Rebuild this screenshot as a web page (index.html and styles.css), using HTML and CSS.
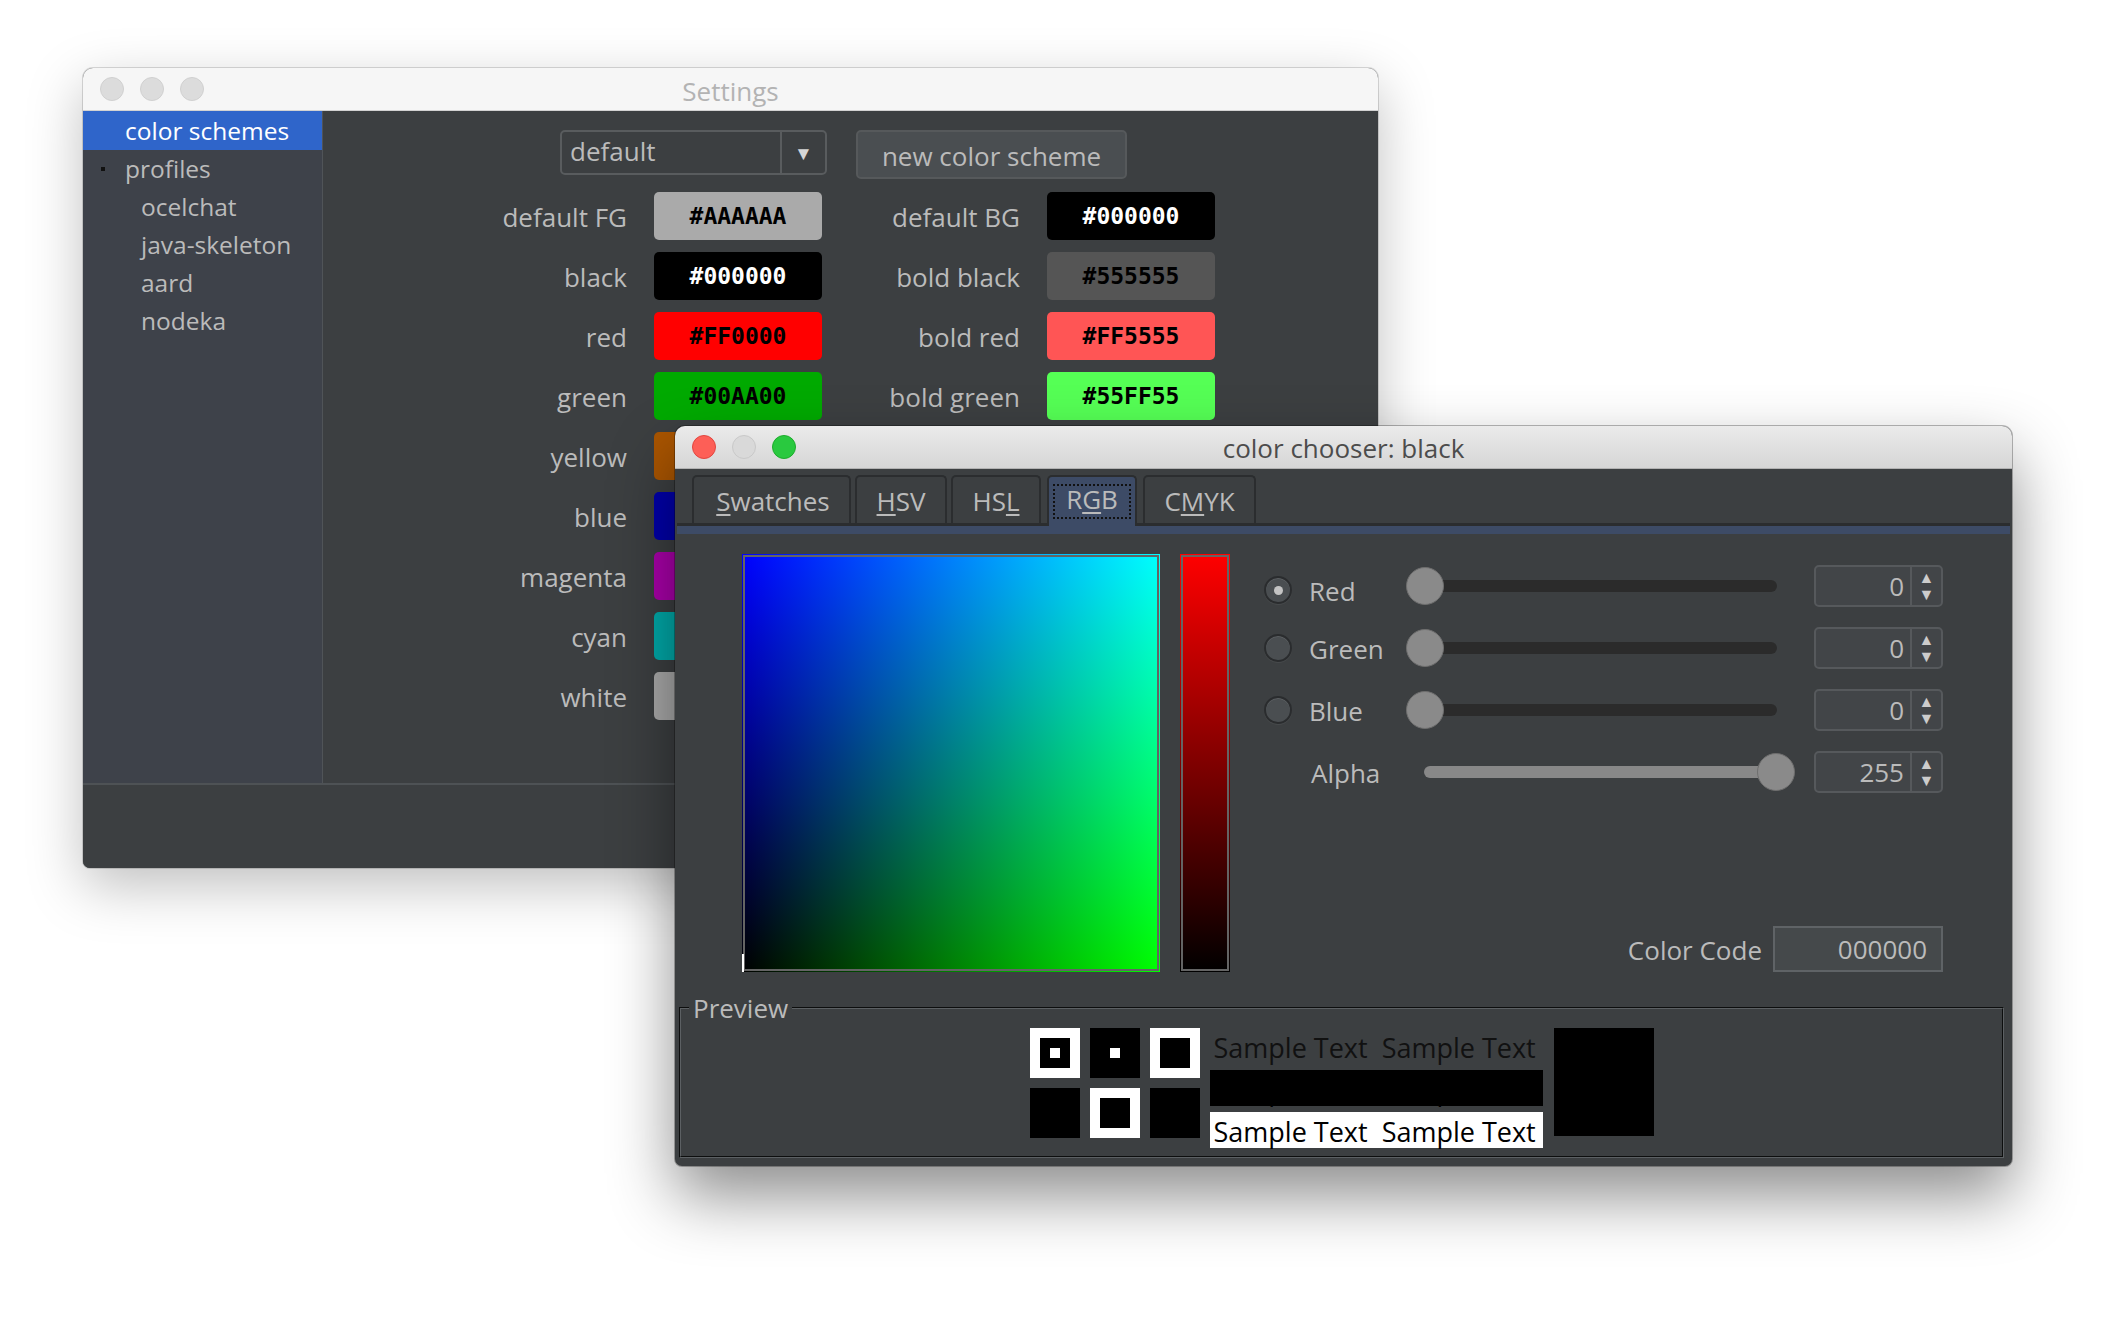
FILE: index.html
```html
<!DOCTYPE html>
<html lang="en">
<head>
<meta charset="utf-8">
<title>Settings</title>
<link rel="stylesheet" href="styles.css">
</head>
<body>
<div class="desktop">

  <section class="window settings">
    <header class="titlebar inactive">
      <div class="lights">
        <span class="light off"></span><span class="light off"></span><span class="light off"></span>
      </div>
      <div class="title">Settings</div>
      <div></div>
    </header>
    <div class="settings-main">
      <nav class="sidebar">
        <div class="nav-item selected">color schemes</div>
        <div class="nav-item parent"><span class="bullet"></span>profiles</div>
        <div class="nav-item child">ocelchat</div>
        <div class="nav-item child">java-skeleton</div>
        <div class="nav-item child">aard</div>
        <div class="nav-item child">nodeka</div>
      </nav>
      <main class="scheme">
        <div class="scheme-top">
          <div class="combo"><span class="combo-value">default</span><span class="combo-arrow">▼</span></div>
          <button class="btn">new color scheme</button>
        </div>
        <div class="swatch-grid">
          <span class="lbl">default FG</span><span class="sw" style="background:#AAAAAA">#AAAAAA</span>
          <span class="lbl">default BG</span><span class="sw sw-light" style="background:#000000">#000000</span>
          <span class="lbl">black</span><span class="sw sw-light" style="background:#000000">#000000</span>
          <span class="lbl">bold black</span><span class="sw" style="background:#555555">#555555</span>
          <span class="lbl">red</span><span class="sw" style="background:#FF0000">#FF0000</span>
          <span class="lbl">bold red</span><span class="sw" style="background:#FF5555">#FF5555</span>
          <span class="lbl">green</span><span class="sw" style="background:#00AA00">#00AA00</span>
          <span class="lbl">bold green</span><span class="sw" style="background:#55FF55">#55FF55</span>
          <span class="lbl">yellow</span><span class="sw" style="background:#AA5500">#AA5500</span>
          <span class="lbl">bold yellow</span><span class="sw" style="background:#FFFF55">#FFFF55</span>
          <span class="lbl">blue</span><span class="sw" style="background:#0000AA">#0000AA</span>
          <span class="lbl">bold blue</span><span class="sw" style="background:#5555FF">#5555FF</span>
          <span class="lbl">magenta</span><span class="sw" style="background:#AA00AA">#AA00AA</span>
          <span class="lbl">bold magenta</span><span class="sw" style="background:#FF55FF">#FF55FF</span>
          <span class="lbl">cyan</span><span class="sw" style="background:#00AAAA">#00AAAA</span>
          <span class="lbl">bold cyan</span><span class="sw" style="background:#55FFFF">#55FFFF</span>
          <span class="lbl">white</span><span class="sw" style="background:#AAAAAA">#AAAAAA</span>
          <span class="lbl">bold white</span><span class="sw" style="background:#FFFFFF">#FFFFFF</span>
        </div>
      </main>
    </div>
    <footer class="settings-footer"></footer>
  </section>

  <section class="window chooser">
    <header class="titlebar active">
      <div class="lights">
        <span class="light close"></span><span class="light min"></span><span class="light max"></span>
      </div>
      <div class="title">color chooser: black</div>
      <div></div>
    </header>
    <div class="chooser-body">
      <div class="tabs">
        <div class="tab tab-swatches"><span class="mn">S</span>watches</div>
        <div class="tab tab-hsv"><span class="mn">H</span>SV</div>
        <div class="tab tab-hsl">HS<span class="mn">L</span></div>
        <div class="tab tab-rgb selected">R<span class="mn">G</span>B</div>
        <div class="tab tab-cmyk">C<span class="mn">M</span>YK</div>
      </div>
      <div class="tab-strip"></div>

      <div class="chooser-main">
        <div class="grad-square"><span class="cursor"></span></div>
        <div class="red-bar"></div>
        <div class="controls">
          <div class="ctl-row first">
            <span class="radio on"></span>
            <span class="ctl-label">Red</span>
            <div class="slider"><span class="track"></span><span class="knob"></span></div>
            <div class="spinner"><span class="spin-val">0</span><span class="spin-arrows"><span>▲</span><span>▼</span></span></div>
          </div>
          <div class="ctl-row">
            <span class="radio"></span>
            <span class="ctl-label">Green</span>
            <div class="slider"><span class="track"></span><span class="knob"></span></div>
            <div class="spinner"><span class="spin-val">0</span><span class="spin-arrows"><span>▲</span><span>▼</span></span></div>
          </div>
          <div class="ctl-row">
            <span class="radio"></span>
            <span class="ctl-label">Blue</span>
            <div class="slider"><span class="track"></span><span class="knob"></span></div>
            <div class="spinner"><span class="spin-val">0</span><span class="spin-arrows"><span>▲</span><span>▼</span></span></div>
          </div>
          <div class="ctl-row">
            <span></span>
            <span class="ctl-label alpha-label">Alpha</span>
            <div class="slider full"><span class="track"></span><span class="knob"></span></div>
            <div class="spinner"><span class="spin-val">255</span><span class="spin-arrows"><span>▲</span><span>▼</span></span></div>
          </div>
          <div class="code-row">
            <span class="code-label">Color Code</span>
            <span class="code-input">000000</span>
          </div>
        </div>
      </div>

      <fieldset class="preview">
        <legend>Preview</legend>
        <div class="pv">
          <div class="pv-squares">
            <div class="sq sq-w"><div class="in in-b"><div class="dot dot-w"></div></div></div>
            <div class="sq sq-b"><div class="dot dot-w"></div></div>
            <div class="sq sq-w"><div class="in in-b"></div></div>
            <div class="sq sq-b"></div>
            <div class="sq sq-w"><div class="in in-b"></div></div>
            <div class="sq sq-b"></div>
          </div>
          <div class="pv-samples">
            <div class="sample plain">Sample Text  Sample Text</div>
            <div class="sample onblack">Sample Text  Sample Text</div>
            <div class="sample onwhite">Sample Text  Sample Text</div>
          </div>
          <div class="pv-big"></div>
        </div>
      </fieldset>
    </div>
  </section>

</div>
</body>
</html>
```
FILE: styles.css
```css
* { box-sizing: border-box; margin: 0; padding: 0; }

html, body {
  width: 2124px;
  height: 1326px;
  overflow: hidden;
  background: #ffffff;
}

body {
  font-family: "Open Sans", "Noto Sans", sans-serif;
  font-size: 26px;
  color: #bbbbbb;
}

.desktop {
  position: relative;
  width: 2124px;
  height: 1326px;
  background: #ffffff;
}

/* ---------- windows ---------- */
.window {
  position: absolute;
  display: flex;
  flex-direction: column;
  background: #3c3f41;
  border-radius: 10px 10px 7px 7px;
  overflow: hidden;
}

.settings {
  left: 83px;
  top: 68px;
  width: 1295px;
  height: 800px;
  box-shadow: 0 18px 55px rgba(0, 0, 0, 0.25), 0 0 0 1px rgba(0, 0, 0, 0.14);
}

.chooser {
  left: 675px;
  top: 426px;
  width: 1337px;
  height: 740px;
  z-index: 2;
  box-shadow: 0 30px 65px rgba(0, 0, 0, 0.45), 0 0 0 1px rgba(0, 0, 0, 0.28);
}

.titlebar {
  flex: none;
  height: 43px;
  display: grid;
  grid-template-columns: 1fr auto 1fr;
  align-items: center;
  border-bottom: 1px solid #d2d2d2;
}

.titlebar.inactive {
  background: #f6f6f6;
  color: #b3b3b3;
}

.titlebar.active {
  background: linear-gradient(#ebebeb, #d6d6d6);
  color: #4c4c4c;
  border-bottom-color: #b2b2b2;
}

.title {
  font-size: 26px;
  line-height: 1;
}

.inactive .title { padding-top: 3px; }
.active .title { padding-top: 1px; }

.lights {
  display: flex;
  gap: 16px;
  padding-left: 17px;
}

.light {
  width: 24px;
  height: 24px;
  border-radius: 50%;
}

.light.off { background: #dcdcdc; border: 1px solid #d0d0d0; }
.light.close { background: #fd5f57; border: 1px solid #e1463f; }
.light.min { background: #d9d9d9; border: 1px solid #c8c8c8; }
.light.max { background: #29c93f; border: 1px solid #1dac2c; }

/* ---------- settings ---------- */
.settings-main {
  flex: none;
  height: 672px;
  display: flex;
}

.sidebar {
  width: 240px;
  flex: none;
  background: #3e424a;
  border-right: 1px solid #505458;
  font-size: 24.5px;
}

.nav-item {
  display: flex;
  align-items: center;
  height: 37.8px;
  padding-left: 42px;
  color: #bbbbbb;
  white-space: nowrap;
}

.nav-item.selected {
  height: 39px;
  background: #2f65ca;
  color: #ffffff;
}

.nav-item.parent { padding-left: 18px; }
.nav-item.child { padding-left: 58px; }

.bullet {
  width: 4px;
  height: 4px;
  background: #111111;
  margin-right: 20px;
}

.scheme {
  flex: 1;
  padding-top: 19px;
}

.scheme-top {
  display: flex;
  align-items: flex-start;
  gap: 29px;
  margin-left: 237px;
}

.combo {
  width: 267px;
  height: 45px;
  display: flex;
  border: 2px solid #595c5e;
  border-radius: 5px;
}

.combo-value {
  flex: 1;
  padding-left: 8px;
  line-height: 39px;
  color: #bbbbbb;
}

.combo-arrow {
  width: 45px;
  border-left: 2px solid #595c5e;
  display: flex;
  align-items: center;
  justify-content: center;
  font-size: 19px;
  color: #d6d6d6;
}

.btn {
  width: 271px;
  height: 49px;
  border: 2px solid #56595b;
  border-radius: 5px;
  background: #4a4e51;
  font-family: inherit;
  font-size: 26px;
  color: #bbbbbb;
  padding-top: 2px;
}

.swatch-grid {
  margin-top: 13px;
  margin-left: 104px;
  display: grid;
  grid-template-columns: 200px 168px 171px 168px;
  grid-auto-rows: 48px;
  column-gap: 27px;
  row-gap: 12px;
  align-items: center;
}

.lbl {
  text-align: right;
  white-space: nowrap;
  color: #bbbbbb;
  padding-top: 2px;
}

.sw {
  height: 48px;
  border-radius: 5px;
  display: flex;
  align-items: center;
  justify-content: center;
  font-family: "DejaVu Sans Mono", "Liberation Mono", monospace;
  font-weight: bold;
  font-size: 23px;
  color: #000000;
}

.sw.sw-light { color: #ffffff; }

.settings-footer {
  flex: 1;
  border-top: 2px solid #4e5255;
  background: #3c3f41;
}

/* ---------- chooser ---------- */
.chooser-body {
  flex: 1;
  display: flex;
  flex-direction: column;
}

.tabs {
  display: flex;
  gap: 4px;
  padding: 6px 0 0 17px;
  height: 54px;
  flex: none;
}

.tab {
  position: relative;
  height: 48px;
  padding-top: 2px;
  border: 2px solid #2b2d2f;
  border-bottom: none;
  border-radius: 5px 5px 0 0;
  line-height: 44px;
  text-align: center;
  color: #bbbbbb;
  white-space: nowrap;
}

.tab-swatches { width: 159px; padding-left: 3px; }
.tab-hsv { width: 92px; }
.tab-hsl { width: 90px; }
.tab-rgb { width: 90px; margin-left: 2px; }
.tab-cmyk { width: 113px; margin-left: 2px; }

.tab.selected {
  background: #3d4b66;
  height: 51px;
  margin-bottom: -3px;
  padding-top: 0;
  z-index: 1;
}

.tab.selected::after {
  content: "";
  position: absolute;
  left: 4px;
  right: 4px;
  top: 7px;
  bottom: 7px;
  border: 2px dotted #111111;
}

.mn {
  text-decoration: underline;
  text-decoration-thickness: 2px;
  text-underline-offset: 3px;
}

.tab-strip {
  flex: none;
  height: 11px;
  border-top: 3px solid #2b2d2f;
  background: #3d4b66;
  margin: 0 2px;
}

.chooser-main {
  flex: none;
  display: flex;
  padding: 20px 0 0 67px;
  height: 438px;
}

.grad-square {
  position: relative;
  width: 418px;
  height: 418px;
  flex: none;
  background:
    linear-gradient(to bottom, #0000ff, #000000),
    linear-gradient(to right, #000000, #00ff00);
  background-blend-mode: screen;
  outline: 2px solid #646464;
  outline-offset: -3px;
}

.cursor {
  position: absolute;
  left: 0;
  bottom: 0;
  width: 2px;
  height: 18px;
  background: #ffffff;
}

.red-bar {
  width: 50px;
  height: 418px;
  flex: none;
  margin-left: 20px;
  background: linear-gradient(#ff0000, #000000);
  outline: 2px solid #646464;
  outline-offset: -3px;
}

.controls {
  width: 679px;
  height: 418px;
  margin-left: 34px;
  display: flex;
  flex-direction: column;
}

.ctl-row {
  display: grid;
  grid-template-columns: 45px 97px 408px 129px;
  height: 62px;
  align-items: center;
}

.ctl-row.first { margin-top: 1px; }

.radio {
  width: 28px;
  height: 28px;
  border-radius: 50%;
  background: #4a4e51;
  border: 2px solid #2a2c2e;
  box-shadow: 0 1px 0 rgba(255, 255, 255, 0.06), inset 0 1px 0 rgba(255, 255, 255, 0.1);
  display: flex;
  align-items: center;
  justify-content: center;
}

.ctl-row.first .radio { margin-top: 8px; }

.radio.on::after {
  content: "";
  width: 9px;
  height: 9px;
  border-radius: 50%;
  background: #c4c4c4;
}

.ctl-label {
  color: #bbbbbb;
  padding-top: 2px;
}

.ctl-row.first .ctl-label { padding-top: 10px; }

.alpha-label { padding-left: 2px; }

.slider {
  position: relative;
  width: 389px;
  height: 38px;
}

.track {
  position: absolute;
  left: 18px;
  right: 18px;
  top: 13px;
  height: 12px;
  border-radius: 6px;
  background: #2b2b2b;
}

.knob {
  position: absolute;
  left: 0;
  top: 0;
  width: 38px;
  height: 38px;
  border-radius: 50%;
  background: #8a8a8a;
  border: 1px solid #6e6e6e;
}

.slider.full .track { background: #888888; }
.slider.full .knob { left: auto; right: 0; }

.spinner {
  width: 129px;
  height: 42px;
  display: flex;
  border: 2px solid #56595c;
  border-radius: 5px;
  background: #424548;
}

.spin-val {
  flex: 1;
  text-align: right;
  padding-right: 6px;
  line-height: 38px;
  color: #bbbbbb;
}

.spin-arrows {
  width: 31px;
  border-left: 2px solid #56595c;
  display: flex;
  flex-direction: column;
  align-items: center;
  justify-content: center;
  font-size: 16px;
  line-height: 17px;
  color: #cccccc;
}

.code-row {
  margin-top: auto;
  display: flex;
  justify-content: flex-end;
  align-items: center;
  gap: 11px;
}

.code-label { color: #bbbbbb; padding-top: 2px; }

.code-input {
  width: 170px;
  height: 46px;
  border: 2px solid #5f6366;
  background: #45494b;
  text-align: right;
  padding-right: 14px;
  line-height: 42px;
  color: #bbbbbb;
}

/* ---------- preview ---------- */
.preview {
  flex: 1;
  margin: 21px 8px 8px 4px;
  border: 2px groove #5c6063;
  padding: 5px 0 0;
  min-width: 0;
}

.preview legend {
  margin-left: 8px;
  padding: 0 4px;
  line-height: 30px;
  color: #bbbbbb;
}

.pv {
  display: flex;
  justify-content: center;
  align-items: flex-start;
}

.pv-squares {
  display: grid;
  grid-template-columns: repeat(3, 50px);
  grid-template-rows: repeat(2, 50px);
  gap: 10px;
}

.sq {
  width: 50px;
  height: 50px;
  display: flex;
  align-items: center;
  justify-content: center;
}

.sq-w { background: #ffffff; }
.sq-b { background: #000000; }

.in {
  width: 30px;
  height: 30px;
  display: flex;
  align-items: center;
  justify-content: center;
}

.in-b { background: #000000; }

.dot {
  width: 10px;
  height: 10px;
}

.dot-w { background: #ffffff; }

.pv-samples {
  width: 333px;
  margin-left: 10px;
  display: flex;
  flex-direction: column;
  gap: 6px;
}

.sample {
  height: 36px;
  line-height: 33px;
  padding: 3px 0 0 4px;
  white-space: pre;
  color: #111111;
  font-size: 27px;
}

.sample.onblack { background: #000000; color: #000000; }
.sample.onwhite { background: #ffffff; color: #000000; }

.pv-big {
  width: 100px;
  height: 108px;
  margin-left: 11px;
  background: #000000;
}
```
